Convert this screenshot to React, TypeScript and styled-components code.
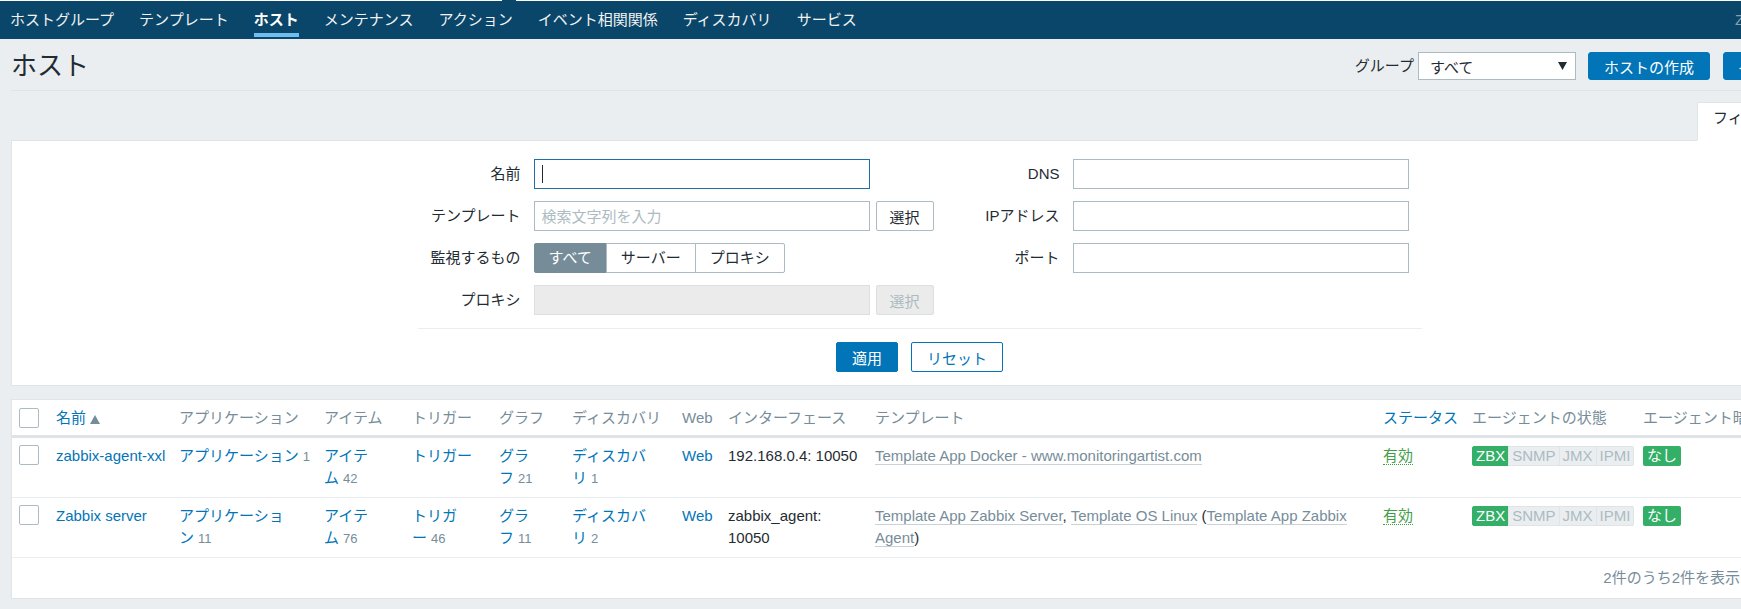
import styled, { createGlobalStyle } from "styled-components";
import { Filter } from "lucide-react";

const GlobalStyle = createGlobalStyle`
  html, body {
    margin: 0;
    padding: 0;
    overflow: hidden;
    background: #ebeef0;
  }
  body {
    font-family: "Liberation Sans", "Noto Sans CJK JP", sans-serif;
    font-size: 15px;
    color: #1f2c33;
    line-break: loose;
  }
  * {
    box-sizing: border-box;
  }
`;

const Page = styled.div`
  width: 1839px;
  padding-bottom: 20px;
`;

// 上部ナビゲーション
const TopNav = styled.nav`
  position: relative;
  display: flex;
  align-items: flex-start;
  gap: 25px;
  height: 39px;
  padding-left: 10px;
  border-top: 1px solid #ffffff;
  background: #0a466a;
`;

const NavNotch = styled.span`
  position: absolute;
  top: -1px;
  left: 502px;
  width: 14px;
  height: 1px;
  background: #0a466a;
`;

const NavItem = styled.a<{ $active?: boolean }>`
  display: block;
  padding: 9px 0 3px;
  line-height: 20px;
  font-size: 15px;
  white-space: nowrap;
  text-decoration: none;
  color: ${(p) => (p.$active ? "#ffffff" : "#f2f2f2")};
  font-weight: ${(p) => (p.$active ? 700 : 400)};
  border-bottom: 4px solid ${(p) => (p.$active ? "#70bef0" : "transparent")};
`;

const NavRight = styled.div`
  margin-left: auto;
  width: 104px;
  padding-top: 9px;
  line-height: 20px;
  color: #8aa0ad;
  white-space: nowrap;
`;

// ページヘッダー
const PageHeader = styled.header`
  display: flex;
  align-items: center;
  justify-content: space-between;
  margin: 0 11px;
  padding: 13px 0 10px;
  border-bottom: 1px solid #dfe4e7;
`;

const Title = styled.h1`
  margin: 0;
  font-size: 26px;
  line-height: 28px;
  font-weight: 400;
  color: #1f2c33;
`;

const HeaderControls = styled.div`
  display: flex;
  align-items: center;
`;

const ControlLabel = styled.span`
  margin-right: 4px;
  line-height: 28px;
`;

const SelectBox = styled.div`
  display: flex;
  align-items: center;
  justify-content: space-between;
  width: 158px;
  height: 28px;
  padding: 0 8px 0 11px;
  border: 1px solid #acbbc2;
  background: #ffffff;
  margin-right: 12px;
`;

const HeaderButton = styled.button<{ $gap?: number; $pad?: number }>`
  height: 28px;
  padding: 0 ${(p) => p.$pad ?? 15}px;
  margin-left: ${(p) => p.$gap ?? 0}px;
  border: 1px solid #0275b8;
  border-radius: 3px;
  background: #0275b8;
  color: #ffffff;
  font: inherit;
  white-space: nowrap;
`;

const PrimaryButton = styled.button`
  height: 30px;
  padding: 0 15px;
  border: 1px solid #0275b8;
  border-radius: 2px;
  background: #0275b8;
  color: #ffffff;
  font: inherit;
`;

const OutlineButton = styled.button`
  height: 30px;
  padding: 0 15px;
  border: 1px solid #0275b8;
  border-radius: 2px;
  background: #ffffff;
  color: #0275b8;
  font: inherit;
`;

// フィルタータブ
const TabRow = styled.div`
  display: flex;
  justify-content: flex-end;
  margin: 11px 11px -1px;
`;

const FilterTab = styled.div`
  position: relative;
  z-index: 1;
  display: flex;
  align-items: flex-start;
  gap: 8px;
  width: 131px;
  height: 39px;
  padding: 4px 15px 0;
  line-height: 22px;
  background: #ffffff;
  border: 1px solid #dfe4e7;
  border-bottom-color: #ffffff;
  color: #1f2c33;
  white-space: nowrap;

  svg {
    margin-top: 5px;
    color: #768d99;
  }
`;

const FilterPanel = styled.section`
  margin: 0 11px;
  padding: 18px 0 13px;
  background: #ffffff;
  border: 1px solid #dfe4e7;
`;

const FormGrid = styled.div`
  display: grid;
  grid-template-columns: 103px 400px 113px 336px;
  grid-auto-rows: 30px;
  column-gap: 13px;
  row-gap: 12px;
  width: 1004px;
  margin: 0 auto;
  padding-right: 13px;
`;

const FieldLabel = styled.label`
  text-align: right;
  line-height: 30px;
  white-space: nowrap;
`;

const FieldRow = styled.div`
  display: flex;
  gap: 6px;
`;

const InputWrap = styled.div`
  position: relative;
  width: 336px;
`;

const TextInput = styled.input<{ $focused?: boolean }>`
  width: 336px;
  height: 30px;
  padding: 0 7px;
  border: 1px solid ${(p) => (p.$focused ? "#1d6fa5" : "#acbbc2")};
  background: #ffffff;
  font: inherit;
  color: #1f2c33;
  outline: none;

  &::placeholder {
    color: #acbbc2;
  }

  &:disabled {
    background: #ebebeb;
    border-color: #dcdfe0;
  }
`;

const Caret = styled.span`
  position: absolute;
  left: 8px;
  top: 6px;
  width: 1px;
  height: 18px;
  background: #1f2c33;
`;

const SelectButton = styled.button`
  height: 30px;
  width: 58px;
  border: 1px solid #acbbc2;
  border-radius: 2px;
  background: #ffffff;
  color: #1f2c33;
  font: inherit;

  &:disabled {
    background: #ebebeb;
    border-color: #dcdfe0;
    color: #acbbc2;
  }
`;

const Segmented = styled.div`
  display: flex;
`;

const Segment = styled.span<{ $active?: boolean }>`
  height: 30px;
  padding: 0 14px;
  line-height: 28px;
  border: 1px solid ${(p) => (p.$active ? "#768d99" : "#acbbc2")};
  background: ${(p) => (p.$active ? "#768d99" : "#ffffff")};
  color: ${(p) => (p.$active ? "#ffffff" : "#1f2c33")};
  white-space: nowrap;

  & + & {
    margin-left: -1px;
  }
  &:first-child {
    border-radius: 2px 0 0 2px;
  }
  &:last-child {
    border-radius: 0 2px 2px 0;
  }
`;

const FormDivider = styled.hr`
  width: 1004px;
  margin: 13px auto;
  border: 0;
  border-top: 1px solid #ebeef0;
`;

const FormActions = styled.div`
  display: flex;
  justify-content: center;
  gap: 13px;
`;

// ホスト一覧
const TablePanel = styled.section`
  margin: 13px 11px 0;
  background: #ffffff;
  border: 1px solid #dfe4e7;
`;

const Table = styled.table`
  width: 100%;
  table-layout: fixed;
  border-collapse: collapse;
`;

const Col = styled.col<{ $w: number }>`
  width: ${(p) => p.$w}px;
`;

const Th = styled.th<{ $first?: boolean }>`
  padding: 7px 6px 6px ${(p) => (p.$first ? 7 : 6)}px;
  line-height: 22px;
  text-align: left;
  font-weight: 400;
  color: #768d99;
  white-space: nowrap;
  overflow: hidden;
  border-bottom: 3px solid #dfe4e7;
`;

const Td = styled.td<{ $first?: boolean }>`
  padding: 7px 6px 7px ${(p) => (p.$first ? 7 : 6)}px;
  line-height: 22px;
  vertical-align: top;
  border-bottom: 1px solid #ebeef0;
  overflow: hidden;
`;

const Checkbox = styled.input.attrs({ type: "checkbox" })`
  appearance: none;
  display: block;
  width: 20px;
  height: 20px;
  margin: 0;
  border: 1px solid #acbbc2;
  border-radius: 2px;
  background: #ffffff;
`;

const Link = styled.a`
  color: #0275b8;
  text-decoration: none;
`;

const SortArrow = styled.svg`
  margin-left: 4px;
  vertical-align: -1px;
`;

const Glue = styled.span`
  white-space: nowrap;
`;

const Count = styled.sup`
  margin-left: 4px;
  font-size: 13px;
  vertical-align: baseline;
  color: #768d99;
`;

const TemplateLink = styled.a`
  color: #768d99;
  text-decoration: none;
  border-bottom: 1px solid #c8d2d7;
`;

const StatusText = styled.span`
  color: #429e47;
  border-bottom: 1px dotted #429e47;
`;

const BadgeGroup = styled.span`
  display: inline-flex;
  vertical-align: top;
  margin-top: 1px;
`;

const Badge = styled.span<{ $on?: boolean }>`
  height: 20px;
  padding: 0 3px;
  line-height: 18px;
  border: 1px solid ${(p) => (p.$on ? "#34af67" : "#dfe4e7")};
  background: ${(p) => (p.$on ? "#34af67" : "#ebeef0")};
  color: ${(p) => (p.$on ? "#ffffff" : "#acbbc2")};

  & + & {
    margin-left: -1px;
  }
  &:first-child {
    border-radius: 2px 0 0 2px;
  }
  &:last-child {
    border-radius: 0 2px 2px 0;
  }
`;

const TagBadge = styled.span`
  display: inline-block;
  height: 20px;
  margin-top: 1px;
  padding: 0 4px;
  line-height: 20px;
  vertical-align: top;
  border-radius: 2px;
  background: #34af67;
  color: #ffffff;
`;

const TableFooter = styled.div`
  padding: 9px 87px 9px 6px;
  text-align: right;
  line-height: 22px;
  font-size: 15px;
  color: #768d99;
`;

const navItems = [
  "ホストグループ",
  "テンプレート",
  "ホスト",
  "メンテナンス",
  "アクション",
  "イベント相関関係",
  "ディスカバリ",
  "サービス",
];

const columns: { title: string; width: number; sortable?: boolean }[] = [
  { title: "", width: 38 },
  { title: "名前", width: 123, sortable: true },
  { title: "アプリケーション", width: 145 },
  { title: "アイテム", width: 88 },
  { title: "トリガー", width: 87 },
  { title: "グラフ", width: 73 },
  { title: "ディスカバリ", width: 110 },
  { title: "Web", width: 46 },
  { title: "インターフェース", width: 147 },
  { title: "テンプレート", width: 508 },
  { title: "ステータス", width: 89, sortable: true },
  { title: "エージェントの状態", width: 171 },
  { title: "エージェント暗号化", width: 190 },
];

type Host = {
  name: string;
  apps: number;
  items: number;
  triggers?: number;
  graphs: number;
  discovery: number;
  iface: string;
  templates: React.ReactNode;
};

const hosts: Host[] = [
  {
    name: "zabbix-agent-xxl",
    apps: 1,
    items: 42,
    graphs: 21,
    discovery: 1,
    iface: "192.168.0.4: 10050",
    templates: (
      <TemplateLink>Template App Docker - www.monitoringartist.com</TemplateLink>
    ),
  },
  {
    name: "Zabbix server",
    apps: 11,
    items: 76,
    triggers: 46,
    graphs: 11,
    discovery: 2,
    iface: "zabbix_agent: 10050",
    templates: (
      <>
        <TemplateLink>Template App Zabbix Server</TemplateLink>,{" "}
        <TemplateLink>Template OS Linux</TemplateLink> (
        <TemplateLink>Template App Zabbix Agent</TemplateLink>)
      </>
    ),
  },
];

// 件数付きリンク: 最後の文字と件数は改行で分けない
const CountLink = ({ label, count }: { label: string; count?: number }) => {
  if (count === undefined) return <Link>{label}</Link>;
  return (
    <>
      <Link>{label.slice(0, -1)}</Link>
      <Glue>
        <Link>{label.slice(-1)}</Link>
        <Count>{count}</Count>
      </Glue>
    </>
  );
};

const App = () => {
  return (
    <Page>
      <GlobalStyle />
      <TopNav>
        <NavNotch />
        {navItems.map((item) => (
          <NavItem key={item} $active={item === "ホスト"}>
            {item}
          </NavItem>
        ))}
        <NavRight>Zabbix</NavRight>
      </TopNav>

      <PageHeader>
        <Title>ホスト</Title>
        <HeaderControls>
          <ControlLabel>グループ</ControlLabel>
          <SelectBox>
            <span>すべて</span>
            <svg width="9" height="8" viewBox="0 0 9 8">
              <path d="M0 0h9L4.5 8z" fill="#1f2c33" />
            </svg>
          </SelectBox>
          <HeaderButton>ホストの作成</HeaderButton>
          <HeaderButton $gap={13} $pad={14}>
            インポート
          </HeaderButton>
        </HeaderControls>
      </PageHeader>

      <TabRow>
        <FilterTab>
          フィルター
          <Filter size={13} />
        </FilterTab>
      </TabRow>

      <FilterPanel>
        <FormGrid>
          <FieldLabel>名前</FieldLabel>
          <InputWrap>
            <TextInput $focused readOnly />
            <Caret />
          </InputWrap>
          <FieldLabel>DNS</FieldLabel>
          <TextInput />

          <FieldLabel>テンプレート</FieldLabel>
          <FieldRow>
            <TextInput placeholder="検索文字列を入力" />
            <SelectButton>選択</SelectButton>
          </FieldRow>
          <FieldLabel>IPアドレス</FieldLabel>
          <TextInput />

          <FieldLabel>監視するもの</FieldLabel>
          <Segmented>
            <Segment $active>すべて</Segment>
            <Segment>サーバー</Segment>
            <Segment>プロキシ</Segment>
          </Segmented>
          <FieldLabel>ポート</FieldLabel>
          <TextInput />

          <FieldLabel>プロキシ</FieldLabel>
          <FieldRow>
            <TextInput disabled />
            <SelectButton disabled>選択</SelectButton>
          </FieldRow>
        </FormGrid>
        <FormDivider />
        <FormActions>
          <PrimaryButton>適用</PrimaryButton>
          <OutlineButton>リセット</OutlineButton>
        </FormActions>
      </FilterPanel>

      <TablePanel>
        <Table>
          <colgroup>
            {columns.map((c, i) => (
              <Col key={i} $w={c.width} />
            ))}
          </colgroup>
          <thead>
            <tr>
              {columns.map((c, i) =>
                i === 0 ? (
                  <Th key={i} $first>
                    <Checkbox />
                  </Th>
                ) : (
                  <Th key={i}>
                    {c.sortable ? <Link>{c.title}</Link> : c.title}
                    {c.title === "名前" && (
                      <SortArrow width="10" height="9" viewBox="0 0 10 9">
                        <path d="M5 0l5 9H0z" fill="#768d99" />
                      </SortArrow>
                    )}
                  </Th>
                )
              )}
            </tr>
          </thead>
          <tbody>
            {hosts.map((h) => (
              <tr key={h.name}>
                <Td $first>
                  <Checkbox />
                </Td>
                <Td>
                  <Link>{h.name}</Link>
                </Td>
                <Td>
                  <CountLink label="アプリケーション" count={h.apps} />
                </Td>
                <Td>
                  <CountLink label="アイテム" count={h.items} />
                </Td>
                <Td>
                  <CountLink label="トリガー" count={h.triggers} />
                </Td>
                <Td>
                  <CountLink label="グラフ" count={h.graphs} />
                </Td>
                <Td>
                  <CountLink label="ディスカバリ" count={h.discovery} />
                </Td>
                <Td>
                  <Link>Web</Link>
                </Td>
                <Td>{h.iface}</Td>
                <Td>{h.templates}</Td>
                <Td>
                  <StatusText>有効</StatusText>
                </Td>
                <Td>
                  <BadgeGroup>
                    <Badge $on>ZBX</Badge>
                    <Badge>SNMP</Badge>
                    <Badge>JMX</Badge>
                    <Badge>IPMI</Badge>
                  </BadgeGroup>
                </Td>
                <Td>
                  <TagBadge>なし</TagBadge>
                </Td>
              </tr>
            ))}
          </tbody>
        </Table>
        <TableFooter>2件のうち2件を表示</TableFooter>
      </TablePanel>
    </Page>
  );
};

export default App;
